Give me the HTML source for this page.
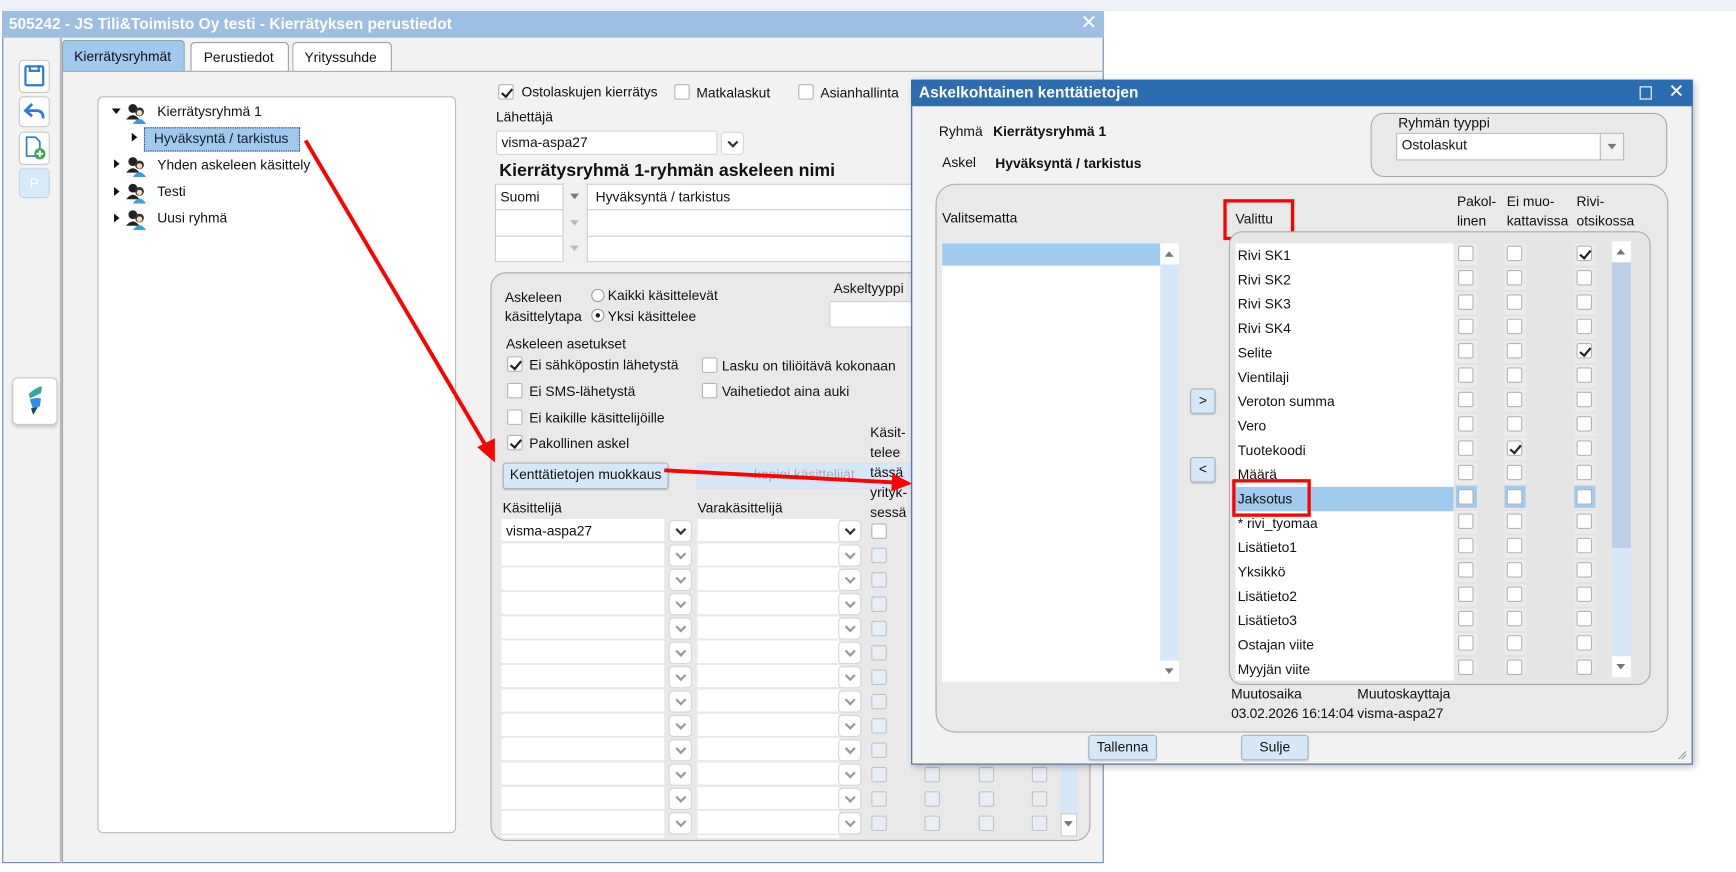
<!DOCTYPE html>
<html><head><meta charset="utf-8">
<style>
*{box-sizing:border-box;margin:0;padding:0}
html,body{width:1736px;height:872px;overflow:hidden;background:#fff;font-family:"Liberation Sans",Arial,sans-serif;font-size:12.5px;color:#111}
#w{position:absolute;left:0;top:0;width:1568px;height:788px;transform:scale(1.1071,1.1066);transform-origin:0 0}
.a{position:absolute}
.t{position:absolute;white-space:nowrap;line-height:15px}
.cb{position:absolute;width:14px;height:14px;background:#fff;border:1px solid #b4b4b4;border-radius:2px}
.cb.g{background:#e9edf4;border-color:#c4c4c4}
.ck::after{content:"";position:absolute;left:4px;top:1px;width:4px;height:8px;border:solid #222;border-width:0 2px 2px 0;transform:rotate(40deg)}
.in{position:absolute;background:#fff;border:1px solid #d2d2d2;border-radius:2px}
.dd{position:absolute;background:#fff;border:1px solid #d6d6d6;border-radius:4px}
.dd::after{content:"";position:absolute;left:50%;top:50%;width:5px;height:5px;border:solid #999;border-width:0 2px 2px 0;transform:translate(-50%,-70%) rotate(45deg)}
.dd.k::after{border-color:#333}
.tri{position:absolute;width:0;height:0;border-left:4px solid transparent;border-right:4px solid transparent;border-top:5px solid #777}
.btn{position:absolute;background:#d6e8f8;border:1px solid #a8b4c0;border-radius:3px;text-align:center;line-height:21px;box-shadow:0 1px 1px rgba(0,0,0,.15)}
.row{position:absolute;left:0;width:197px;height:22px;padding-left:2px;line-height:22px}
</style></head><body><div id="w">
<div class="a" style="left:0;top:0;width:1568px;height:10px;background:#eef2f8"></div>
<div class="a" style="left:2px;top:10px;width:995px;height:770px;background:#f2f2f2;border:1px solid #6d8ab2"></div>
<div class="a" style="left:2px;top:10px;width:995px;height:24px;background:#9dbfe2"></div>
<div class="t" style="left:8px;top:14px;color:#fff;font-weight:bold;font-size:14px">505242 - JS Tili&amp;Toimisto Oy testi - Kierrätyksen perustiedot</div>
<div class="t" style="left:976px;top:13px;color:#fff;font-size:18px">✕</div>
<div class="a" style="left:54px;top:34px;width:2px;height:746px;background:#bbb"></div>
<div class="a" style="left:17px;top:54px;width:28px;height:30px;background:#fff;border:1px solid #c8c8c8;border-radius:4px"></div>
<div class="a" style="left:22px;top:59px;width:18px;height:19px;border:2px solid #2e7bd6;border-radius:2px"></div>
<div class="a" style="left:26px;top:59px;width:10px;height:6px;border:2px solid #2e7bd6;border-top:none"></div>
<div class="a" style="left:17px;top:87px;width:28px;height:28px;background:#fff;border:1px solid #c8c8c8;border-radius:4px"></div>
<svg class="a" style="left:20px;top:90px" width="22" height="22"><path d="M9 4 L3 10 L9 15 M3 10 H13 Q19 10 19 17" fill="none" stroke="#2e7bd6" stroke-width="2.5"/></svg>
<div class="a" style="left:17px;top:119px;width:28px;height:30px;background:#fff;border:1px solid #c8c8c8;border-radius:4px"></div>
<svg class="a" style="left:20px;top:122px" width="24" height="24"><path d="M4 2 H12 L16 6 V19 H4 Z" fill="#fff" stroke="#2e7bd6" stroke-width="1.5"/><circle cx="16" cy="17" r="5" fill="#3ba34a"/><path d="M13 17 H19 M16 14 V20" stroke="#fff" stroke-width="2"/></svg>
<div class="a" style="left:17px;top:152px;width:28px;height:27px;background:#d8ebfb;border:1px solid #c0d4e8;border-radius:4px;color:#fff;text-align:center;line-height:26px">P</div>
<div class="a" style="left:11px;top:341px;width:41px;height:43px;background:#fff;border:1px solid #c8c8c8;border-radius:5px;box-shadow:0 2px 3px rgba(0,0,0,.15)"></div>
<svg class="a" style="left:22px;top:348px" width="20" height="30"><path d="M4 8 Q10 2 16 1 L15 7 Q10 10 5 12 Z" fill="#35a89a"/><path d="M5 13 Q10 11 15 12 L14 19 L8 22 Z" fill="#2f8df0"/><path d="M6 21 L12 20 L8 27 Z" fill="#0f4a5a"/></svg>
<div class="a" style="left:56px;top:36px;width:111px;height:29px;background:#a0c9ee;border:1px solid #8aa;border-bottom:none;border-radius:4px 4px 0 0"></div>
<div class="t" style="left:67px;top:44px">Kierrätysryhmät</div>
<div class="a" style="left:172px;top:38px;width:89px;height:26px;background:#fff;border:1px solid #999;border-bottom:none;border-radius:4px 4px 0 0"></div>
<div class="t" style="left:184px;top:45px">Perustiedot</div>
<div class="a" style="left:264px;top:38px;width:90px;height:26px;background:#fff;border:1px solid #999;border-bottom:none;border-radius:4px 4px 0 0"></div>
<div class="t" style="left:275px;top:45px">Yrityssuhde</div>
<div class="a" style="left:56px;top:64px;width:941px;height:716px;border-top:1px solid #aaa;border-left:1px solid #aaa"></div>
<div class="a" style="left:88px;top:87px;width:324px;height:666px;background:#fff;border:1px solid #bbb;border-radius:5px"></div>
<div class="a" style="left:101px;top:98px;border-left:4px solid transparent;border-right:4px solid transparent;border-top:5px solid #111"></div>
<div class="a" style="left:119px;top:120px;border-top:4px solid transparent;border-bottom:4px solid transparent;border-left:5px solid #111"></div>
<div class="a" style="left:103px;top:144px;border-top:4px solid transparent;border-bottom:4px solid transparent;border-left:5px solid #111"></div>
<div class="a" style="left:103px;top:169px;border-top:4px solid transparent;border-bottom:4px solid transparent;border-left:5px solid #111"></div>
<div class="a" style="left:103px;top:193px;border-top:4px solid transparent;border-bottom:4px solid transparent;border-left:5px solid #111"></div>
<svg class="a" style="left:113px;top:92px" width="20" height="20"><circle cx="7" cy="6" r="4" fill="#222"/><path d="M1 16 Q7 8 13 16Z" fill="#222"/><circle cx="13" cy="9" r="4" fill="#333"/><path d="M7 20 Q13 11 19 20Z" fill="#3a9ed4"/><circle cx="13" cy="10" r="2.5" fill="#f4d9b8"/></svg>
<svg class="a" style="left:113px;top:140px" width="20" height="20"><circle cx="7" cy="6" r="4" fill="#222"/><path d="M1 16 Q7 8 13 16Z" fill="#222"/><circle cx="13" cy="9" r="4" fill="#333"/><path d="M7 20 Q13 11 19 20Z" fill="#3a9ed4"/><circle cx="13" cy="10" r="2.5" fill="#f4d9b8"/></svg>
<svg class="a" style="left:113px;top:164px" width="20" height="20"><circle cx="7" cy="6" r="4" fill="#222"/><path d="M1 16 Q7 8 13 16Z" fill="#222"/><circle cx="13" cy="9" r="4" fill="#333"/><path d="M7 20 Q13 11 19 20Z" fill="#3a9ed4"/><circle cx="13" cy="10" r="2.5" fill="#f4d9b8"/></svg>
<svg class="a" style="left:113px;top:188px" width="20" height="20"><circle cx="7" cy="6" r="4" fill="#222"/><path d="M1 16 Q7 8 13 16Z" fill="#222"/><circle cx="13" cy="9" r="4" fill="#333"/><path d="M7 20 Q13 11 19 20Z" fill="#3a9ed4"/><circle cx="13" cy="10" r="2.5" fill="#f4d9b8"/></svg>
<div class="t" style="left:142px;top:94px">Kierrätysryhmä 1</div>
<div class="a" style="left:130px;top:115px;width:141px;height:22px;background:#a0c9ee;border:1px dotted #336"></div>
<div class="t" style="left:139px;top:118px;color:#123">Hyväksyntä / tarkistus</div>
<div class="t" style="left:142px;top:142px">Yhden askeleen käsittely</div>
<div class="t" style="left:142px;top:166px">Testi</div>
<div class="t" style="left:142px;top:190px">Uusi ryhmä</div>
<div class="cb ck" style="left:450px;top:76px"></div><div class="t" style="left:471px;top:76px">Ostolaskujen kierrätys</div>
<div class="cb" style="left:609px;top:76px"></div><div class="t" style="left:629px;top:77px">Matkalaskut</div>
<div class="cb" style="left:721px;top:76px"></div><div class="t" style="left:741px;top:77px">Asianhallinta</div>
<div class="t" style="left:448px;top:99px">Lähettäjä</div>
<div class="in" style="left:448px;top:118px;width:200px;height:22px"></div><div class="t" style="left:453px;top:122px">visma-aspa27</div>
<div class="dd k" style="left:651px;top:119px;width:21px;height:21px"></div>
<div class="t" style="left:451px;top:146px;font-size:16px;font-weight:bold;line-height:18px">Kierrätysryhmä 1-ryhmän askeleen nimi</div>
<div class="a" style="left:447px;top:166px;width:380px;height:71px;background:#fff;border:1px solid #ccc"></div>
<div class="a" style="left:447px;top:189px;width:380px;height:1px;background:#ccc"></div>
<div class="a" style="left:447px;top:213px;width:380px;height:1px;background:#ccc"></div>
<div class="a" style="left:508px;top:166px;width:23px;height:71px;background:#f0f0f0;border-left:1px solid #ccc;border-right:1px solid #ccc"></div>
<div class="tri" style="left:515px;top:175px"></div><div class="tri" style="left:515px;top:199px;border-top-color:#bbb"></div><div class="tri" style="left:515px;top:222px;border-top-color:#bbb"></div>
<div class="t" style="left:452px;top:171px">Suomi</div>
<div class="t" style="left:538px;top:171px">Hyväksyntä / tarkistus</div>
<div class="a" style="left:443px;top:246px;width:542px;height:514px;background:#e9e9e9;border:1px solid #aaa;border-radius:14px"></div>
<div class="t" style="left:456px;top:262px">Askeleen</div>
<div class="t" style="left:456px;top:279px">käsittelytapa</div>
<div class="a" style="left:534px;top:261px;width:12px;height:12px;border-radius:50%;background:#fff;border:1px solid #999"></div>
<div class="t" style="left:549px;top:260px">Kaikki käsittelevät</div>
<div class="a" style="left:534px;top:279px;width:12px;height:12px;border-radius:50%;background:#fff;border:1px solid #999"></div>
<div class="a" style="left:538px;top:283px;width:4px;height:4px;border-radius:50%;background:#222"></div>
<div class="t" style="left:549px;top:279px">Yksi käsittelee</div>
<div class="t" style="left:753px;top:254px">Askeltyyppi</div>
<div class="in" style="left:749px;top:272px;width:80px;height:24px"></div>
<div class="t" style="left:457px;top:304px">Askeleen asetukset</div>
<div class="cb ck" style="left:458px;top:322px"></div><div class="t" style="left:478px;top:323px">Ei sähköpostin lähetystä</div>
<div class="cb" style="left:458px;top:346px"></div><div class="t" style="left:478px;top:347px">Ei SMS-lähetystä</div>
<div class="cb" style="left:458px;top:370px"></div><div class="t" style="left:478px;top:371px">Ei kaikille käsittelijöille</div>
<div class="cb ck" style="left:458px;top:393px"></div><div class="t" style="left:478px;top:394px">Pakollinen askel</div>
<div class="cb" style="left:634px;top:323px"></div><div class="t" style="left:652px;top:324px">Lasku on tiliöitävä kokonaan</div>
<div class="cb" style="left:634px;top:346px"></div><div class="t" style="left:652px;top:347px">Vaihetiedot aina auki</div>
<div class="btn" style="left:454px;top:418px;width:150px;height:24px">Kenttätietojen muokkaus</div>
<div class="btn" style="left:629px;top:418px;width:195px;height:24px;color:#aab;border-color:#dde;box-shadow:none">kopioi käsittelijät</div>
<div class="t" style="left:786px;top:382px;line-height:18px">Käsit-<br>telee<br>tässä<br>yrityk-<br>sessä</div>
<div class="t" style="left:454px;top:452px">Käsittelijä</div>
<div class="t" style="left:630px;top:452px">Varakäsittelijä</div>
<div class="a" style="left:453px;top:469px;width:330px;height:288px;overflow:hidden">
<div style="position:absolute;left:0;top:0;width:330px;height:290px;background:repeating-linear-gradient(#fff 0 20px,#e9e9e9 20px 22px)"></div>
<div style="position:absolute;left:147px;top:0;width:30px;height:290px;background:#e9e9e9"></div>
<div style="position:absolute;left:305px;top:0;width:30px;height:290px;background:#e9e9e9"></div>
</div>
<div class="t" style="left:457px;top:473px">visma-aspa27</div>
<div class="dd k" style="left:604px;top:470px;width:21px;height:20px"></div><div class="dd k" style="left:757px;top:470px;width:21px;height:20px"></div><div class="cb" style="left:787px;top:473px"></div>
<div class="dd" style="left:604px;top:492px;width:21px;height:20px"></div><div class="dd" style="left:757px;top:492px;width:21px;height:20px"></div><div class="cb g" style="left:787px;top:495px"></div>
<div class="dd" style="left:604px;top:514px;width:21px;height:20px"></div><div class="dd" style="left:757px;top:514px;width:21px;height:20px"></div><div class="cb g" style="left:787px;top:517px"></div>
<div class="dd" style="left:604px;top:536px;width:21px;height:20px"></div><div class="dd" style="left:757px;top:536px;width:21px;height:20px"></div><div class="cb g" style="left:787px;top:539px"></div>
<div class="dd" style="left:604px;top:558px;width:21px;height:20px"></div><div class="dd" style="left:757px;top:558px;width:21px;height:20px"></div><div class="cb g" style="left:787px;top:561px"></div>
<div class="dd" style="left:604px;top:580px;width:21px;height:20px"></div><div class="dd" style="left:757px;top:580px;width:21px;height:20px"></div><div class="cb g" style="left:787px;top:583px"></div>
<div class="dd" style="left:604px;top:602px;width:21px;height:20px"></div><div class="dd" style="left:757px;top:602px;width:21px;height:20px"></div><div class="cb g" style="left:787px;top:605px"></div>
<div class="dd" style="left:604px;top:624px;width:21px;height:20px"></div><div class="dd" style="left:757px;top:624px;width:21px;height:20px"></div><div class="cb g" style="left:787px;top:627px"></div>
<div class="dd" style="left:604px;top:646px;width:21px;height:20px"></div><div class="dd" style="left:757px;top:646px;width:21px;height:20px"></div><div class="cb g" style="left:787px;top:649px"></div>
<div class="dd" style="left:604px;top:668px;width:21px;height:20px"></div><div class="dd" style="left:757px;top:668px;width:21px;height:20px"></div><div class="cb g" style="left:787px;top:671px"></div>
<div class="dd" style="left:604px;top:690px;width:21px;height:20px"></div><div class="dd" style="left:757px;top:690px;width:21px;height:20px"></div><div class="cb g" style="left:787px;top:693px"></div>
<div class="dd" style="left:604px;top:712px;width:21px;height:20px"></div><div class="dd" style="left:757px;top:712px;width:21px;height:20px"></div><div class="cb g" style="left:787px;top:715px"></div>
<div class="dd" style="left:604px;top:734px;width:21px;height:20px"></div><div class="dd" style="left:757px;top:734px;width:21px;height:20px"></div><div class="cb g" style="left:787px;top:737px"></div>
<div class="cb g" style="left:835px;top:693px"></div><div class="cb g" style="left:884px;top:693px"></div><div class="cb g" style="left:932px;top:693px"></div>
<div class="cb g" style="left:835px;top:715px"></div><div class="cb g" style="left:884px;top:715px"></div><div class="cb g" style="left:932px;top:715px"></div>
<div class="cb g" style="left:835px;top:737px"></div><div class="cb g" style="left:884px;top:737px"></div><div class="cb g" style="left:932px;top:737px"></div>
<div class="a" style="left:958px;top:680px;width:15px;height:76px;background:#d6e8f8"></div>
<div class="a" style="left:958px;top:735px;width:15px;height:21px;background:#fff;border:1px solid #ccc"></div>
<div class="tri" style="left:961px;top:742px"></div>
<div class="a" style="left:823px;top:72px;width:706px;height:619px;background:#f2f2f2;border:1px solid #44659a;box-shadow:2px 2px 6px rgba(0,0,0,.25)"></div>
<div class="a" style="left:823px;top:72px;width:706px;height:24px;background:#2c6cb0"></div>
<div class="t" style="left:830px;top:76px;color:#fff;font-weight:bold;font-size:14px">Askelkohtainen kenttätietojen</div>
<div class="a" style="left:1481px;top:78px;width:11px;height:12px;border:1.5px solid #fff"></div>
<div class="t" style="left:1507px;top:75px;color:#fff;font-size:17px">✕</div>
<div class="t" style="left:848px;top:112px">Ryhmä</div><div class="t" style="left:897px;top:112px;font-weight:bold">Kierrätysryhmä 1</div>
<div class="t" style="left:851px;top:140px">Askel</div><div class="t" style="left:899px;top:141px;font-weight:bold">Hyväksyntä / tarkistus</div>
<div class="a" style="left:1238px;top:102px;width:268px;height:58px;border:1px solid #aaa;border-radius:12px;background:#eaeaea"></div>
<div class="t" style="left:1263px;top:104px">Ryhmän tyyppi</div>
<div class="a" style="left:1261px;top:120px;width:206px;height:25px;background:#fff;border:1px solid #bbb"></div>
<div class="a" style="left:1445px;top:120px;width:22px;height:25px;background:#f2f2f2;border:1px solid #bbb"></div>
<div class="tri" style="left:1452px;top:130px"></div>
<div class="t" style="left:1266px;top:124px">Ostolaskut</div>
<div class="a" style="left:845px;top:166px;width:662px;height:496px;border:1px solid #aaa;border-radius:18px;background:#e9e9e9"></div>
<div class="t" style="left:851px;top:190px">Valitsematta</div>
<div class="a" style="left:851px;top:220px;width:214px;height:396px;background:#fff"></div>
<div class="a" style="left:851px;top:220px;width:197px;height:20px;background:#9fcbee"></div>
<div class="a" style="left:1048px;top:220px;width:17px;height:396px;background:#d6e8f8"></div>
<div class="a" style="left:1048px;top:220px;width:17px;height:19px;background:#fff"></div>
<div class="a" style="left:1048px;top:597px;width:17px;height:19px;background:#fff"></div>
<div class="a" style="left:1052px;top:227px;border-left:4px solid transparent;border-right:4px solid transparent;border-bottom:5px solid #777"></div>
<div class="tri" style="left:1052px;top:604px"></div>
<div class="btn" style="left:1075px;top:351px;width:23px;height:23px">&gt;</div>
<div class="btn" style="left:1075px;top:413px;width:23px;height:23px">&lt;</div>
<div class="t" style="left:1116px;top:191px">Valittu</div>
<div class="a" style="left:1105px;top:180px;width:64px;height:37px;border:3px solid #f00"></div>
<div class="t" style="left:1316px;top:173px;line-height:18px">Pakol-<br>linen</div>
<div class="t" style="left:1361px;top:173px;line-height:18px">Ei muo-<br>kattavissa</div>
<div class="t" style="left:1424px;top:173px;line-height:18px">Rivi-<br>otsikossa</div>
<div class="a" style="left:1110px;top:209px;width:381px;height:410px;border:1px solid #aaa;border-radius:12px;background:#e6e6e6"></div>
<div class="a" style="left:1116px;top:220px;width:197px;height:395px;background:#fff;overflow:hidden">
<div class="row" style="top:0">Rivi SK1</div><div class="row" style="top:22px">Rivi SK2</div><div class="row" style="top:44px">Rivi SK3</div><div class="row" style="top:66px">Rivi SK4</div><div class="row" style="top:88px">Selite</div><div class="row" style="top:110px">Vientilaji</div><div class="row" style="top:132px">Veroton summa</div><div class="row" style="top:154px">Vero</div><div class="row" style="top:176px">Tuotekoodi</div><div class="row" style="top:198px">Määrä</div><div class="row" style="top:220px;background:#9fcbee">Jaksotus</div><div class="row" style="top:242px">* rivi_tyomaa</div><div class="row" style="top:264px">Lisätieto1</div><div class="row" style="top:286px">Yksikkö</div><div class="row" style="top:308px">Lisätieto2</div><div class="row" style="top:330px">Lisätieto3</div><div class="row" style="top:352px">Ostajan viite</div><div class="row" style="top:374px">Myyjän viite</div>
</div>
<div class="a" style="left:1315px;top:220px;width:19px;height:388px;background:repeating-linear-gradient(#ececec 0 20px,#e3e3e3 20px 22px)"></div>
<div class="a" style="left:1359px;top:220px;width:19px;height:388px;background:repeating-linear-gradient(#ececec 0 20px,#e3e3e3 20px 22px)"></div>
<div class="a" style="left:1422px;top:220px;width:19px;height:388px;background:repeating-linear-gradient(#ececec 0 20px,#e3e3e3 20px 22px)"></div>
<div class="a" style="left:1315px;top:439px;width:19px;height:20px;background:#9fcbee"></div>
<div class="a" style="left:1359px;top:439px;width:19px;height:20px;background:#9fcbee"></div>
<div class="a" style="left:1422px;top:439px;width:19px;height:20px;background:#9fcbee"></div>
<div class="a" style="left:1317px;top:222px">
<div class="cb" style="left:0;top:0"></div><div class="cb" style="left:44px;top:0"></div><div class="cb ck" style="left:107px;top:0"></div>
<div class="cb" style="left:0;top:22px"></div><div class="cb" style="left:44px;top:22px"></div><div class="cb" style="left:107px;top:22px"></div>
<div class="cb" style="left:0;top:44px"></div><div class="cb" style="left:44px;top:44px"></div><div class="cb" style="left:107px;top:44px"></div>
<div class="cb" style="left:0;top:66px"></div><div class="cb" style="left:44px;top:66px"></div><div class="cb" style="left:107px;top:66px"></div>
<div class="cb" style="left:0;top:88px"></div><div class="cb" style="left:44px;top:88px"></div><div class="cb ck" style="left:107px;top:88px"></div>
<div class="cb" style="left:0;top:110px"></div><div class="cb" style="left:44px;top:110px"></div><div class="cb" style="left:107px;top:110px"></div>
<div class="cb" style="left:0;top:132px"></div><div class="cb" style="left:44px;top:132px"></div><div class="cb" style="left:107px;top:132px"></div>
<div class="cb" style="left:0;top:154px"></div><div class="cb" style="left:44px;top:154px"></div><div class="cb" style="left:107px;top:154px"></div>
<div class="cb" style="left:0;top:176px"></div><div class="cb ck" style="left:44px;top:176px"></div><div class="cb" style="left:107px;top:176px"></div>
<div class="cb" style="left:0;top:198px"></div><div class="cb" style="left:44px;top:198px"></div><div class="cb" style="left:107px;top:198px"></div>
<div class="cb" style="left:0;top:220px"></div><div class="cb" style="left:44px;top:220px"></div><div class="cb" style="left:107px;top:220px"></div>
<div class="cb" style="left:0;top:242px"></div><div class="cb" style="left:44px;top:242px"></div><div class="cb" style="left:107px;top:242px"></div>
<div class="cb" style="left:0;top:264px"></div><div class="cb" style="left:44px;top:264px"></div><div class="cb" style="left:107px;top:264px"></div>
<div class="cb" style="left:0;top:286px"></div><div class="cb" style="left:44px;top:286px"></div><div class="cb" style="left:107px;top:286px"></div>
<div class="cb" style="left:0;top:308px"></div><div class="cb" style="left:44px;top:308px"></div><div class="cb" style="left:107px;top:308px"></div>
<div class="cb" style="left:0;top:330px"></div><div class="cb" style="left:44px;top:330px"></div><div class="cb" style="left:107px;top:330px"></div>
<div class="cb" style="left:0;top:352px"></div><div class="cb" style="left:44px;top:352px"></div><div class="cb" style="left:107px;top:352px"></div>
<div class="cb" style="left:0;top:374px"></div><div class="cb" style="left:44px;top:374px"></div><div class="cb" style="left:107px;top:374px"></div>
</div>
<div class="a" style="left:1456px;top:218px;width:17px;height:394px;background:#d6e8f8"></div>
<div class="a" style="left:1456px;top:236px;width:17px;height:259px;background:#bccfe6"></div>
<div class="a" style="left:1456px;top:218px;width:17px;height:19px;background:#fff"></div>
<div class="a" style="left:1456px;top:593px;width:17px;height:19px;background:#fff"></div>
<div class="a" style="left:1460px;top:225px;border-left:4px solid transparent;border-right:4px solid transparent;border-bottom:5px solid #777"></div>
<div class="tri" style="left:1460px;top:600px"></div>
<div class="a" style="left:1113px;top:433px;width:71px;height:34px;border:3px solid #f00"></div>
<div class="t" style="left:1112px;top:620px">Muutosaika</div>
<div class="t" style="left:1112px;top:638px;letter-spacing:-0.2px">03.02.2026 16:14:04</div>
<div class="t" style="left:1226px;top:620px">Muutoskayttaja</div>
<div class="t" style="left:1226px;top:638px">visma-aspa27</div>
<div class="btn" style="left:983px;top:664px;width:62px;height:23px">Tallenna</div>
<div class="btn" style="left:1121px;top:664px;width:61px;height:23px">Sulje</div>
<svg class="a" style="left:1514px;top:677px" width="10" height="10"><path d="M2 9 L9 2 M5 9 L9 5" stroke="#999"/></svg>
<svg class="a" style="left:0;top:0" width="1568" height="788">
<line x1="276" y1="127" x2="440" y2="405" stroke="#f00" stroke-width="3.5"/>
<polygon points="447,418 431,404 447,396" fill="#f00"/>
<line x1="600" y1="425" x2="808" y2="436" stroke="#f00" stroke-width="3.5"/>
<polygon points="824,437 806,428 805,444" fill="#f00"/>
</svg>
</div></body></html>
